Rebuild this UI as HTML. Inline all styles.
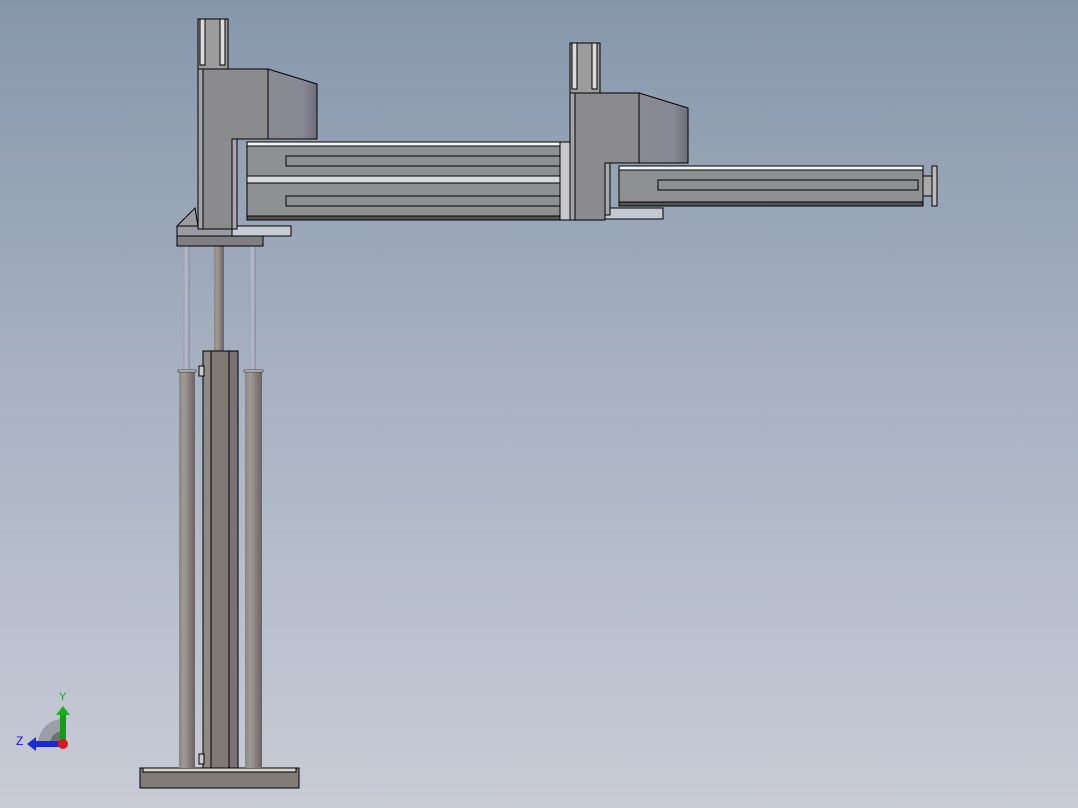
<!DOCTYPE html>
<html><head><style>
html,body{margin:0;padding:0;width:1078px;height:808px;overflow:hidden}
body{background:linear-gradient(#8797ab,#a9b3c3 50%,#c9ccd7);font-family:"Liberation Sans",sans-serif}
svg{display:block}
</style></head><body>
<svg width="1078" height="808" viewBox="0 0 1078 808" xmlns="http://www.w3.org/2000/svg">
<defs>
<linearGradient id="sl" x1="0" x2="1"><stop offset="0" stop-color="#8a8a92"/><stop offset="0.7" stop-color="#888896"/><stop offset="1" stop-color="#6e6c78"/></linearGradient>
<linearGradient id="rod" x1="0" x2="1"><stop offset="0" stop-color="#8a8580"/><stop offset="0.3" stop-color="#a09b96"/><stop offset="0.8" stop-color="#7c7272"/><stop offset="1" stop-color="#6a6266"/></linearGradient>
<linearGradient id="rod2" x1="0" x2="1"><stop offset="0" stop-color="#9ca2b4"/><stop offset="0.5" stop-color="#b6bccc"/><stop offset="1" stop-color="#8a90a2"/></linearGradient>
</defs>
<g stroke="#000" stroke-width="1">
<rect x="140" y="768" width="159" height="20" fill="#807c78"/>
<rect x="143" y="768" width="153" height="4" fill="#d8d4d0"/>
<rect x="183" y="246" width="7" height="124" fill="url(#rod2)" stroke="none"/>
<rect x="249" y="246" width="7" height="124" fill="url(#rod2)" stroke="none"/>
<rect x="214" y="246" width="10" height="106" fill="url(#rod)" stroke="none"/>
<rect x="179" y="372" width="16" height="396" fill="url(#rod)" stroke="none"/>
<rect x="245" y="372" width="17" height="396" fill="url(#rod)" stroke="none"/>
<rect x="178" y="370" width="18" height="2" fill="#ddd" stroke-width="0.5"/>
<rect x="244" y="370" width="19" height="2" fill="#ddd" stroke-width="0.5"/>
<rect x="203" y="351" width="35" height="417" fill="#807a76"/>
<rect x="203" y="351" width="8" height="417" fill="#8e8a86"/>
<rect x="229" y="351" width="9" height="417" fill="#7a7274"/>
<rect x="199" y="366" width="5" height="10" fill="#ccc"/>
<rect x="199" y="754" width="5" height="10" fill="#ccc"/>
<polygon points="177,226 195,208 198,226" fill="#9a9aa0"/>
<rect x="177" y="226" width="114" height="10" fill="#9a9aa0"/>
<rect x="232" y="226" width="59" height="10" fill="#c8ccd4"/>
<rect x="177" y="236" width="86" height="10" fill="#7f7f84"/>
<rect x="247" y="142" width="323" height="78" fill="#8e9092"/>
<rect x="247" y="142" width="323" height="4" fill="#f4f4f4"/>
<rect x="247" y="176" width="323" height="7" fill="#d8d8da"/>
<rect x="247" y="216" width="323" height="4" fill="#555"/>
<rect x="286" y="156" width="284" height="10" fill="#8e9092"/>
<rect x="286" y="196" width="284" height="10" fill="#8e9092"/>
<rect x="560" y="142" width="10" height="78" fill="#c8c8cc"/>
<rect x="198" y="19" width="30" height="50" fill="#9c9c9c"/>
<rect x="200" y="19" width="5" height="46" fill="#dcdcdc"/>
<rect x="220" y="19" width="5" height="46" fill="#dcdcdc"/>
<polygon points="268,69 317,84 317,139 268,139" fill="url(#sl)"/>
<polygon points="198,69 268,69 268,139 232,139 232,229 198,229" fill="#8b8b8d"/>
<rect x="198" y="69" width="5" height="160" fill="#a4a4a8"/>
<rect x="232" y="139" width="5" height="90" fill="#a8a8ac"/>
<rect x="605" y="208" width="58" height="11" fill="#c4c8d0"/>
<rect x="619" y="166" width="304" height="40" fill="#8e9092"/>
<rect x="619" y="166" width="304" height="4" fill="#f4f4f4"/>
<rect x="619" y="202" width="304" height="4" fill="#555"/>
<rect x="658" y="180" width="260" height="10" fill="#8e9092"/>
<rect x="923" y="176" width="9" height="20" fill="#aaa"/>
<rect x="932" y="166" width="5" height="40" fill="#bbb"/>
<rect x="570" y="43" width="30" height="50" fill="#9c9c9c"/>
<rect x="572" y="43" width="5" height="46" fill="#dcdcdc"/>
<rect x="592" y="43" width="5" height="46" fill="#dcdcdc"/>
<polygon points="639,93 688,108 688,163 639,163" fill="url(#sl)"/>
<polygon points="570,93 639,93 639,163 605,163 605,220 570,220" fill="#8b8b8d"/>
<rect x="570" y="93" width="5" height="127" fill="#a4a4a8"/>
<rect x="605" y="163" width="5" height="52" fill="#a8a8ac"/>
</g>
<path d="M63 744 L38 744 A25 25 0 0 1 63 719 Z" fill="#9a9ea6"/>
<path d="M63 744 L50 744 A13 13 0 0 1 63 731 Z" fill="#6e7078"/>
<rect x="60" y="714" width="6" height="30" fill="#1a9a1a"/>
<polygon points="56,715 63,706 70,715" fill="#1ab01a"/>
<rect x="34" y="741" width="29" height="6" fill="#1a2ad8"/>
<polygon points="36,737 27,744 36,751" fill="#1a2ad8"/>
<circle cx="63" cy="744" r="5" fill="#d81a1a"/>
<text x="59" y="700" font-size="11" fill="#1a1">Y</text>
<text x="16" y="745" font-size="12" fill="#11d">Z</text>
</svg>
</body></html>
